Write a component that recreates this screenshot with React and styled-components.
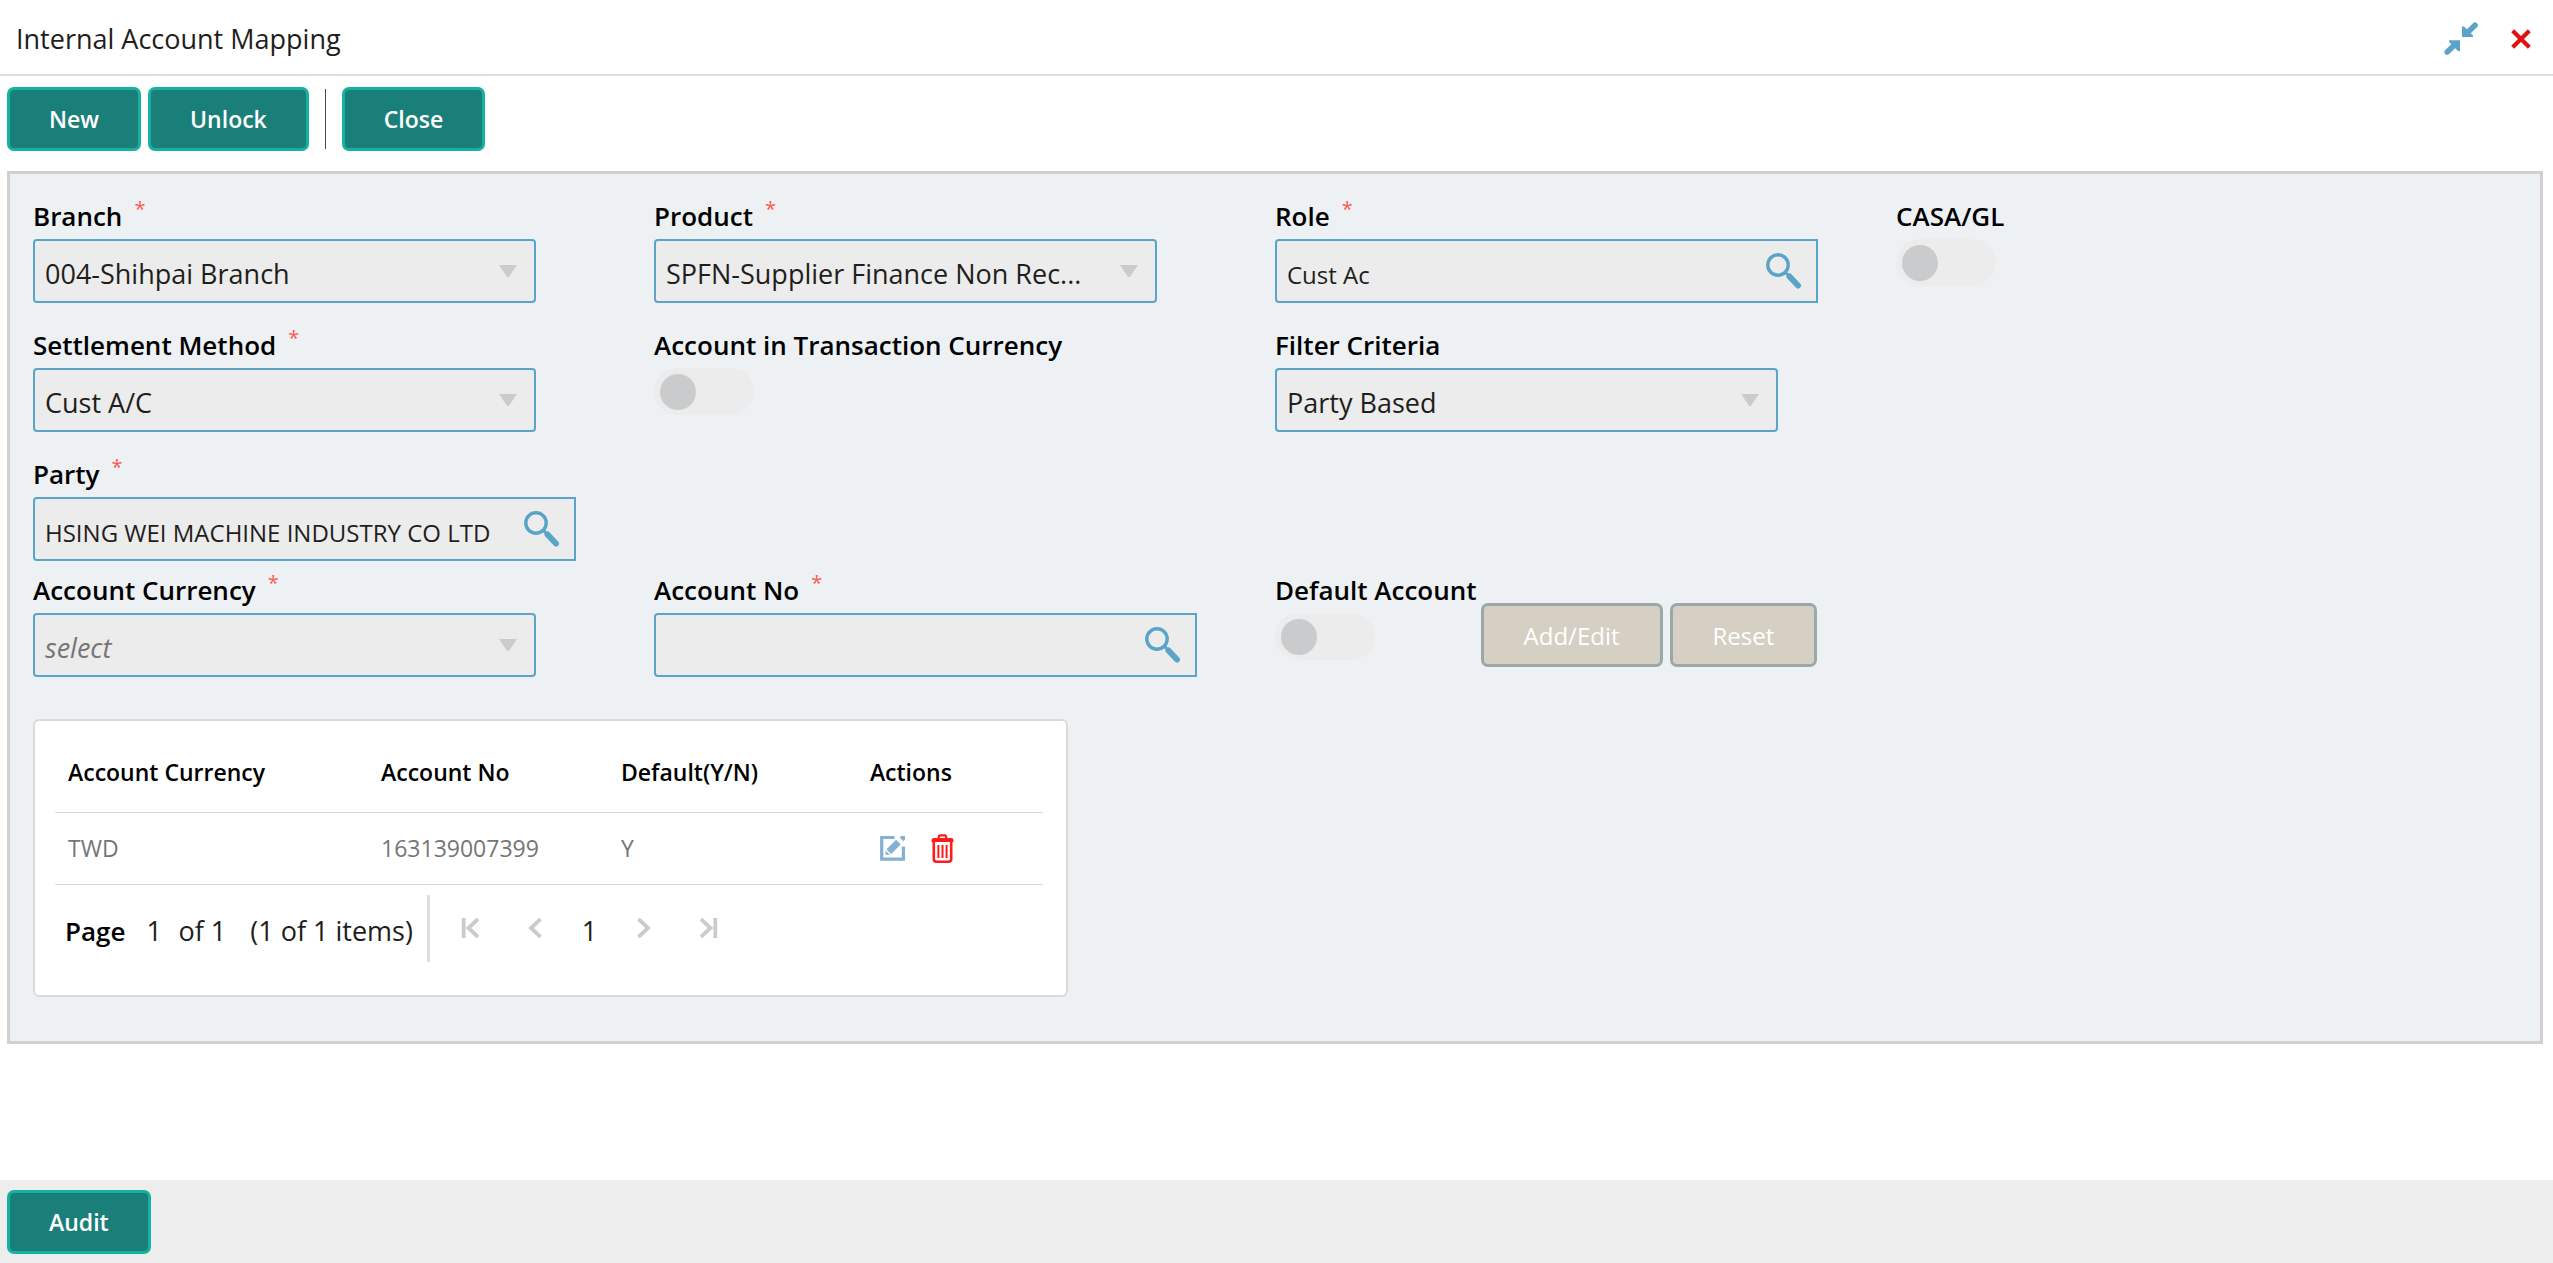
import React from 'react'
import styled, { createGlobalStyle } from 'styled-components';


const SearchIcon = () => (
  <svg width="36" height="36" viewBox="0 0 36 36" fill="none" stroke="#5ba4c9">
    <circle cx="12" cy="12" r="10.2" strokeWidth="3.4" />
    <path d="M19.5 19.5L23 23" strokeWidth="3" />
    <path d="M23.5 23.5L32 32.5" strokeWidth="6" strokeLinecap="round" />
  </svg>
)

const ShrinkIcon = () => (
  <svg width="34" height="34" viewBox="0 0 34 34" fill="#5ba4c9" stroke="#5ba4c9">
    <path d="M18 4.5L20 4.5L29 13.5V15H18Z" stroke="none" />
    <path d="M31 3.2L22.5 11.5" strokeWidth="5.6" strokeLinecap="round" />
    <path d="M16 29L14 29L5 19.8V18.3H16Z" stroke="none" />
    <path d="M3.2 30L11.5 22" strokeWidth="5.6" strokeLinecap="round" />
  </svg>
)

const CloseIcon = () => (
  <svg width="20" height="20" viewBox="0 0 20 20" fill="none" stroke="#e01212" strokeWidth="4.2">
    <path d="M1.7 1.7L18.3 18.3M18.3 1.7L1.7 18.3" />
  </svg>
)

const EditIcon = () => (
  <svg width="25" height="25" viewBox="0 0 25 25" fill="none" stroke="#86afd6">
    <path d="M14.5 1.5H1.7V23.2H23.4V10.5" strokeWidth="3.2" />
    <path d="M8.8 15.6L18.4 6.2" strokeWidth="6.6" />
    <path d="M19.6 1.6L23.2 5.3L25 3.6V0H21.2Z" fill="#86afd6" stroke="none" />
    <path d="M5.6 14.6L9.8 18.8H5.6Z" fill="#86afd6" stroke="none" />
  </svg>
)

const TrashIcon = () => (
  <svg width="23" height="29" viewBox="0 0 23 29" fill="none" stroke="#fb1d1d">
    <path d="M7.8 4.5V3Q7.8 1.4 9.4 1.4H13.6Q15.2 1.4 15.2 3V4.5" strokeWidth="2.2" />
    <path d="M0.5 8V6Q0.5 4 3 4H20Q22.5 4 22.5 6V8Z" fill="#fb1d1d" stroke="none" />
    <path d="M2.8 8V25Q2.8 27.7 5.5 27.7H17.5Q20.2 27.7 20.2 25V8" strokeWidth="2.6" />
    <path d="M7.4 11V24M11.5 11V24M15.6 11V24" strokeWidth="2" />
  </svg>
)

const TriangleIcon = () => (
  <svg width="18" height="12" viewBox="0 0 18 12" fill="#c9cbcd">
    <path d="M0 0H18L9.8 12H8.2Z" />
  </svg>
)

const arrows = {
  first: 'M2.6 0V20M17 1L7.5 10L17 19',
  prev: 'M14.5 1L5 10L14.5 19',
  next: 'M4.5 1L14 10L4.5 19',
  last: 'M2 1L11.5 10L2 19M16.3 0V20',
}

const ArrowIcon = ({ type }) => (
  <svg width="19" height="20" viewBox="0 0 19 20" fill="none" stroke="#c9cbcd" strokeWidth="3.8">
    <path d={arrows[type]} />
  </svg>
)


const Label = ({ htmlFor, required, children }) => (
  <StLabel htmlFor={htmlFor}>
    {children}
    {required && <StStar>*</StStar>}
  </StLabel>
)

const SelectField = ({ id, label, required, value, placeholder }) => (
  <div>
    <Label htmlFor={id} required={required}>{label}</Label>
    <StSelectBox>
      <StSelect id={id} defaultValue={value} $empty={!!placeholder} disabled>
        <option value={value}>{placeholder || value}</option>
      </StSelect>
      <TriangleIcon />
    </StSelectBox>
  </div>
)

const SearchField = ({ id, label, value }) => (
  <div>
    <Label htmlFor={id} required>{label}</Label>
    <StSearchBox>
      <StInput id={id} type="text" defaultValue={value} readOnly />
      <StIconButton type="button" aria-label={`Search ${label}`}><SearchIcon /></StIconButton>
    </StSearchBox>
  </div>
)

const SwitchField = ({ id, label }) => (
  <div>
    <Label htmlFor={id}>{label}</Label>
    <StSwitch id={id} type="checkbox" role="switch" disabled />
  </div>
)


const App = () => {
  return (
    <StPage>
      <GlobalStyle />
      <StHeader>
        <StTitle>Internal Account Mapping</StTitle>
        <StHeaderIcons>
          <StIconButton type="button" aria-label="Minimize"><ShrinkIcon /></StIconButton>
          <StIconButton type="button" aria-label="Close window"><CloseIcon /></StIconButton>
        </StHeaderIcons>
      </StHeader>

      <StToolbar>
        <StButton type="button">New</StButton>
        <StButton type="button">Unlock</StButton>
        <StDivider />
        <StButton type="button">Close</StButton>
      </StToolbar>

      <StPanel>
        <StGrid>
          <SelectField id="branch" label="Branch" required value="004-Shihpai Branch" />
          <SelectField id="product" label="Product" required value="SPFN-Supplier Finance Non Rec..." />
          <SearchField id="role" label="Role" value="Cust Ac" />
          <SwitchField id="casa" label="CASA/GL" />
          <SelectField id="settlement" label="Settlement Method" required value="Cust A/C" />
          <SwitchField id="txnCurrency" label="Account in Transaction Currency" />
          <StWideCell>
            <SelectField id="filter" label="Filter Criteria" value="Party Based" />
          </StWideCell>
          <SearchField id="party" label="Party" value="HSING WEI MACHINE INDUSTRY CO LTD" />
        </StGrid>

        <StGrid>
          <SelectField id="currency" label="Account Currency" required value="" placeholder="select" />
          <SearchField id="accountNo" label="Account No" value="" />
          <StDefaultCell>
            <SwitchField id="defaultAccount" label="Default Account" />
            <StButtonGroup>
              <StGreyButton type="button" disabled>Add/Edit</StGreyButton>
              <StGreyButton type="button" disabled>Reset</StGreyButton>
            </StButtonGroup>
          </StDefaultCell>
        </StGrid>

        <StCard>
          <StTable>
            <thead>
              <tr>
                <StTh $width="31.7%">Account Currency</StTh>
                <StTh $width="24.3%">Account No</StTh>
                <StTh $width="25.2%">Default(Y/N)</StTh>
                <StTh $width="18.8%">Actions</StTh>
              </tr>
            </thead>
            <tbody>
              <tr>
                <StTd>TWD</StTd>
                <StTd>163139007399</StTd>
                <StTd>Y</StTd>
                <StTd>
                  <StActions>
                    <StIconButton type="button" aria-label="Edit"><EditIcon /></StIconButton>
                    <StIconButton type="button" aria-label="Delete"><TrashIcon /></StIconButton>
                  </StActions>
                </StTd>
              </tr>
            </tbody>
          </StTable>
          <StPager>
            <StPageInfo>
              <StPageLabel htmlFor="page">Page</StPageLabel>
              <StPageInput id="page" type="text" defaultValue="1" />
              <span>of 1</span>
              <StItems>(1 of 1 items)</StItems>
            </StPageInfo>
            <StPageNav>
              <StPageButton type="button" aria-label="First page"><ArrowIcon type="first" /></StPageButton>
              <StPageButton type="button" aria-label="Previous page"><ArrowIcon type="prev" /></StPageButton>
              <StPageNumber>1</StPageNumber>
              <StPageButton type="button" aria-label="Next page"><ArrowIcon type="next" /></StPageButton>
              <StPageButton type="button" aria-label="Last page"><ArrowIcon type="last" /></StPageButton>
            </StPageNav>
          </StPager>
        </StCard>
      </StPanel>

      <StFooter>
        <StButton type="button">Audit</StButton>
      </StFooter>
    </StPage>
  )
}

const GlobalStyle = createGlobalStyle`
  * {
    box-sizing: border-box;
  }
  body {
    margin: 0;
    background-color: white;
    color: #1f1e1c;
    font-family: 'Open Sans', 'Noto Sans', sans-serif;
    font-size: 27px;
  }
  button, input, select {
    font-family: inherit;
  }
  svg {
    display: block;
    flex-shrink: 0;
  }
`;

const StPage = styled.div`
  display: flex;
  flex-direction: column;
  min-height: 100vh;
`;

const StHeader = styled.header`
  display: flex;
  justify-content: space-between;
  align-items: center;
  height: 76px;
  padding: 0 22px 0 16px;
  border-bottom: 2px solid #dadee2;
`;

const StTitle = styled.h1`
  margin: 0;
  padding-top: 3px;
  font-weight: 400;
  font-size: 27px;
`;

const StHeaderIcons = styled.div`
  display: flex;
  align-items: center;
  gap: 33px;
  padding-top: 3px;
`;

const StIconButton = styled.button`
  display: flex;
  padding: 0;
  border: none;
  background: none;
  cursor: pointer;
`;

const StToolbar = styled.div`
  display: flex;
  align-items: center;
  gap: 7px;
  padding: 11px 7px 20px;
`;

const StDivider = styled.div`
  width: 1px;
  height: 60px;
  margin: 0 9px;
  background-color: #4a4a4a;
`;

const StButton = styled.button`
  height: 64px;
  padding: 0 39px;
  border: 3px solid #16b1a0;
  border-radius: 7px;
  background-color: #1b7f79;
  color: white;
  font-weight: 600;
  font-size: 23px;
  cursor: pointer;
`;

const StGreyButton = styled(StButton)`
  padding: 0 40px;
  border-color: #9ba8aa;
  background-color: #d6cfc4;
  font-weight: 400;
  font-size: 24px;
  cursor: default;
`;

const StPanel = styled.main`
  display: flex;
  flex-direction: column;
  gap: 11px;
  margin: 0 10px 0 7px;
  padding: 24px 23px 44px;
  border: 3px solid #d2cfcf;
  background-color: #edf1f4;
`;

const StGrid = styled.div`
  display: grid;
  grid-template-columns: repeat(4, 1fr);
  row-gap: 24px;
`;

const StWideCell = styled.div`
  grid-column: span 2;

  & > div {
    width: 50%;
  }
`;

const StDefaultCell = styled.div`
  display: flex;
  align-items: flex-start;
  gap: 4px;
`;

const StButtonGroup = styled.div`
  display: flex;
  gap: 7px;
  padding-top: 31px;
`;

const StLabel = styled.label`
  display: flex;
  height: 41px;
  color: black;
  font-weight: 600;
  font-size: 26px;
  line-height: 36px;
  white-space: nowrap;
`;

const StStar = styled.span`
  margin-left: 12px;
  color: #ff5a50;
  font-weight: 400;
  font-size: 20px;
  line-height: 22px;
`;

const StSelectBox = styled.div`
  display: flex;
  align-items: center;
  width: 81%;
  height: 64px;
  padding-right: 17px;
  border: 2px solid #5ba4c9;
  border-radius: 4px;
  background-color: #ececec;
`;

const StSelect = styled.select`
  flex: 1;
  min-width: 0;
  height: 60px;
  padding: 4px 0 0 10px;
  appearance: none;
  border: none;
  background: none;
  color: ${({ $empty }) => ($empty ? '#757575' : '#1f1e1c')};
  font-style: ${({ $empty }) => ($empty ? 'italic' : 'normal')};
  font-size: 27px;
  opacity: 1;
`;

const StSearchBox = styled(StSelectBox)`
  width: 87.5%;
  padding-right: 14px;
  border-radius: 4px 0 0 4px;
`;

const StInput = styled.input`
  flex: 1;
  min-width: 0;
  height: 60px;
  padding: 6px 0 0 10px;
  border: none;
  background: none;
  color: #1f1e1c;
  font-size: 24px;
`;

const StSwitch = styled.input`
  display: flex;
  align-items: center;
  width: 100px;
  height: 47px;
  margin: 0;
  padding-left: 6px;
  appearance: none;
  border-radius: 24px;
  background-color: #ececec;

  &::before {
    content: '';
    width: 36px;
    height: 36px;
    border-radius: 50%;
    background-color: #c9cbcd;
  }
`;

const StCard = styled.section`
  width: 41.65%;
  margin-top: 31px;
  padding: 12px 23px 33px 20px;
  border: 2px solid #dadada;
  border-radius: 6px;
  background-color: white;
`;

const StTable = styled.table`
  width: 100%;
  border-collapse: collapse;
  table-layout: fixed;
`;

const StTh = styled.th`
  width: ${({ $width }) => $width};
  height: 79px;
  padding: 0 0 0 13px;
  border-bottom: 1px solid #d8d8d8;
  color: black;
  font-weight: 600;
  font-size: 23px;
  text-align: left;
`;

const StTd = styled.td`
  height: 72px;
  padding: 0 0 0 13px;
  border-bottom: 1px solid #d8d8d8;
  color: #757575;
  font-size: 23px;
`;

const StActions = styled.div`
  display: flex;
  align-items: center;
  gap: 26px;
  padding-left: 10px;
`;

const StPager = styled.div`
  display: flex;
  align-items: center;
  height: 67px;
  margin-top: 10px;
  padding-left: 10px;
`;

const StPageInfo = styled.div`
  display: flex;
  align-items: center;
  padding-top: 5px;
  white-space: nowrap;
`;

const StPageLabel = styled.label`
  color: black;
  font-weight: 600;
  font-size: 26px;
`;

const StPageInput = styled.input`
  width: 35px;
  margin-left: 18px;
  padding: 0 0 0 3px;
  border: none;
  color: #1f1e1c;
  font-size: 27px;
`;

const StItems = styled.span`
  margin-left: 24px;
`;

const StPageNav = styled.nav`
  display: flex;
  align-items: center;
  height: 67px;
  margin-left: 14px;
  padding-left: 8px;
  border-left: 3px solid #dedede;
`;

const StPageButton = styled(StIconButton)`
  justify-content: center;
  width: 65px;
`;

const StPageNumber = styled.span`
  width: 43px;
  padding-top: 5px;
  text-align: center;
`;

const StFooter = styled.footer`
  margin-top: auto;
  padding: 10px 7px 9px;
  background-color: #ededed;
`;


export default App
